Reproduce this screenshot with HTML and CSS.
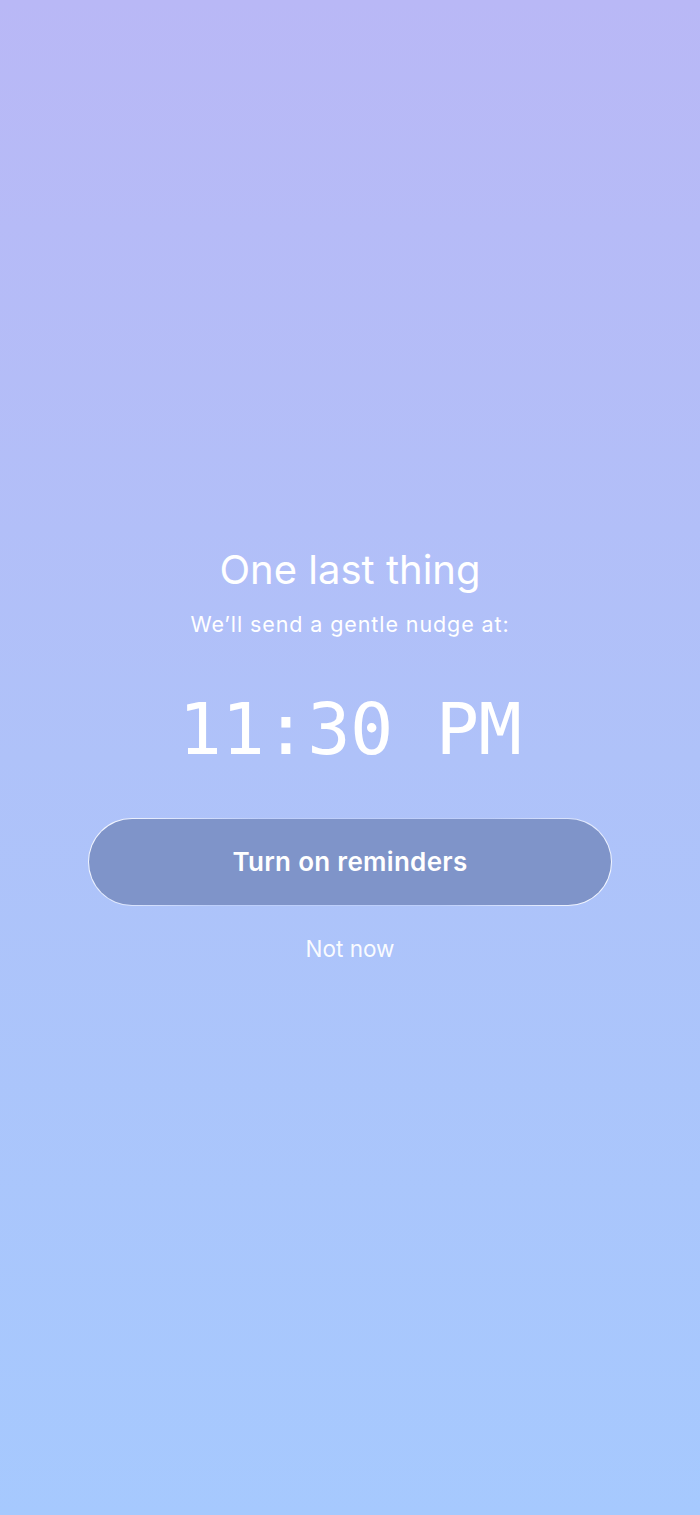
FILE: index.html
```html
<!DOCTYPE html>
<html lang="en">
<head>
  <meta charset="UTF-8">
  <title>Reminders</title>
  <link rel="stylesheet" href="styles.css">
</head>
<body>

  <div class="screen">
    <div class="content">
      <h1 class="title">One last thing</h1>
      <p class="subtitle">We’ll send a gentle nudge at:</p>
      <div class="time">11:30 PM</div>
      <button class="primary">Turn on reminders</button>
      <a href="#" class="secondary">Not now</a>
    </div>
  </div>

</body>
</html>
```

FILE: styles.css
```css
body {
  margin: 0;
  font-family: Inter, "Noto Sans", sans-serif;
  color: white;
}

.screen {
  height: 1515px;
  display: flex;
  align-items: center;
  justify-content: center;
  background: linear-gradient(180deg, #b9b8f6 0%, #afc2f9 50%, #a6c9fe 100%);
}

.content {
  width: 524px;
  padding-bottom: 6px;
  display: flex;
  flex-direction: column;
  align-items: center;
}

.title {
  margin: 0;
  font-size: 40px;
  font-weight: 400;
  line-height: 46px;
}

.subtitle {
  margin: 18px 0 0;
  font-size: 21.5px;
  letter-spacing: 0.9px;
  line-height: 26px;
}

.time {
  margin-top: 50px;
  font-family: "DejaVu Sans Mono", "Liberation Mono", monospace;
  font-size: 72px;
  line-height: 84px;
  letter-spacing: -0.5px;
}

.primary {
  margin-top: 47px;
  width: 524px;
  height: 88px;
  border-radius: 44px;
  border: 1.5px solid transparent;
  background:
    linear-gradient(#7f94c9, #7f94c9) padding-box,
    linear-gradient(120deg, rgba(255, 255, 255, 0.95), rgba(255, 255, 255, 0.2) 30%, rgba(255, 255, 255, 0.2) 70%, rgba(255, 255, 255, 0.95)) border-box;
  color: white;
  font-family: Inter, "Noto Sans", sans-serif;
  font-size: 26px;
  font-weight: 600;
  letter-spacing: 0.3px;
  cursor: pointer;
}

.secondary {
  margin-top: 29px;
  font-size: 22.5px;
  line-height: 28px;
  color: rgba(255, 255, 255, 0.95);
  text-decoration: none;
}
```
